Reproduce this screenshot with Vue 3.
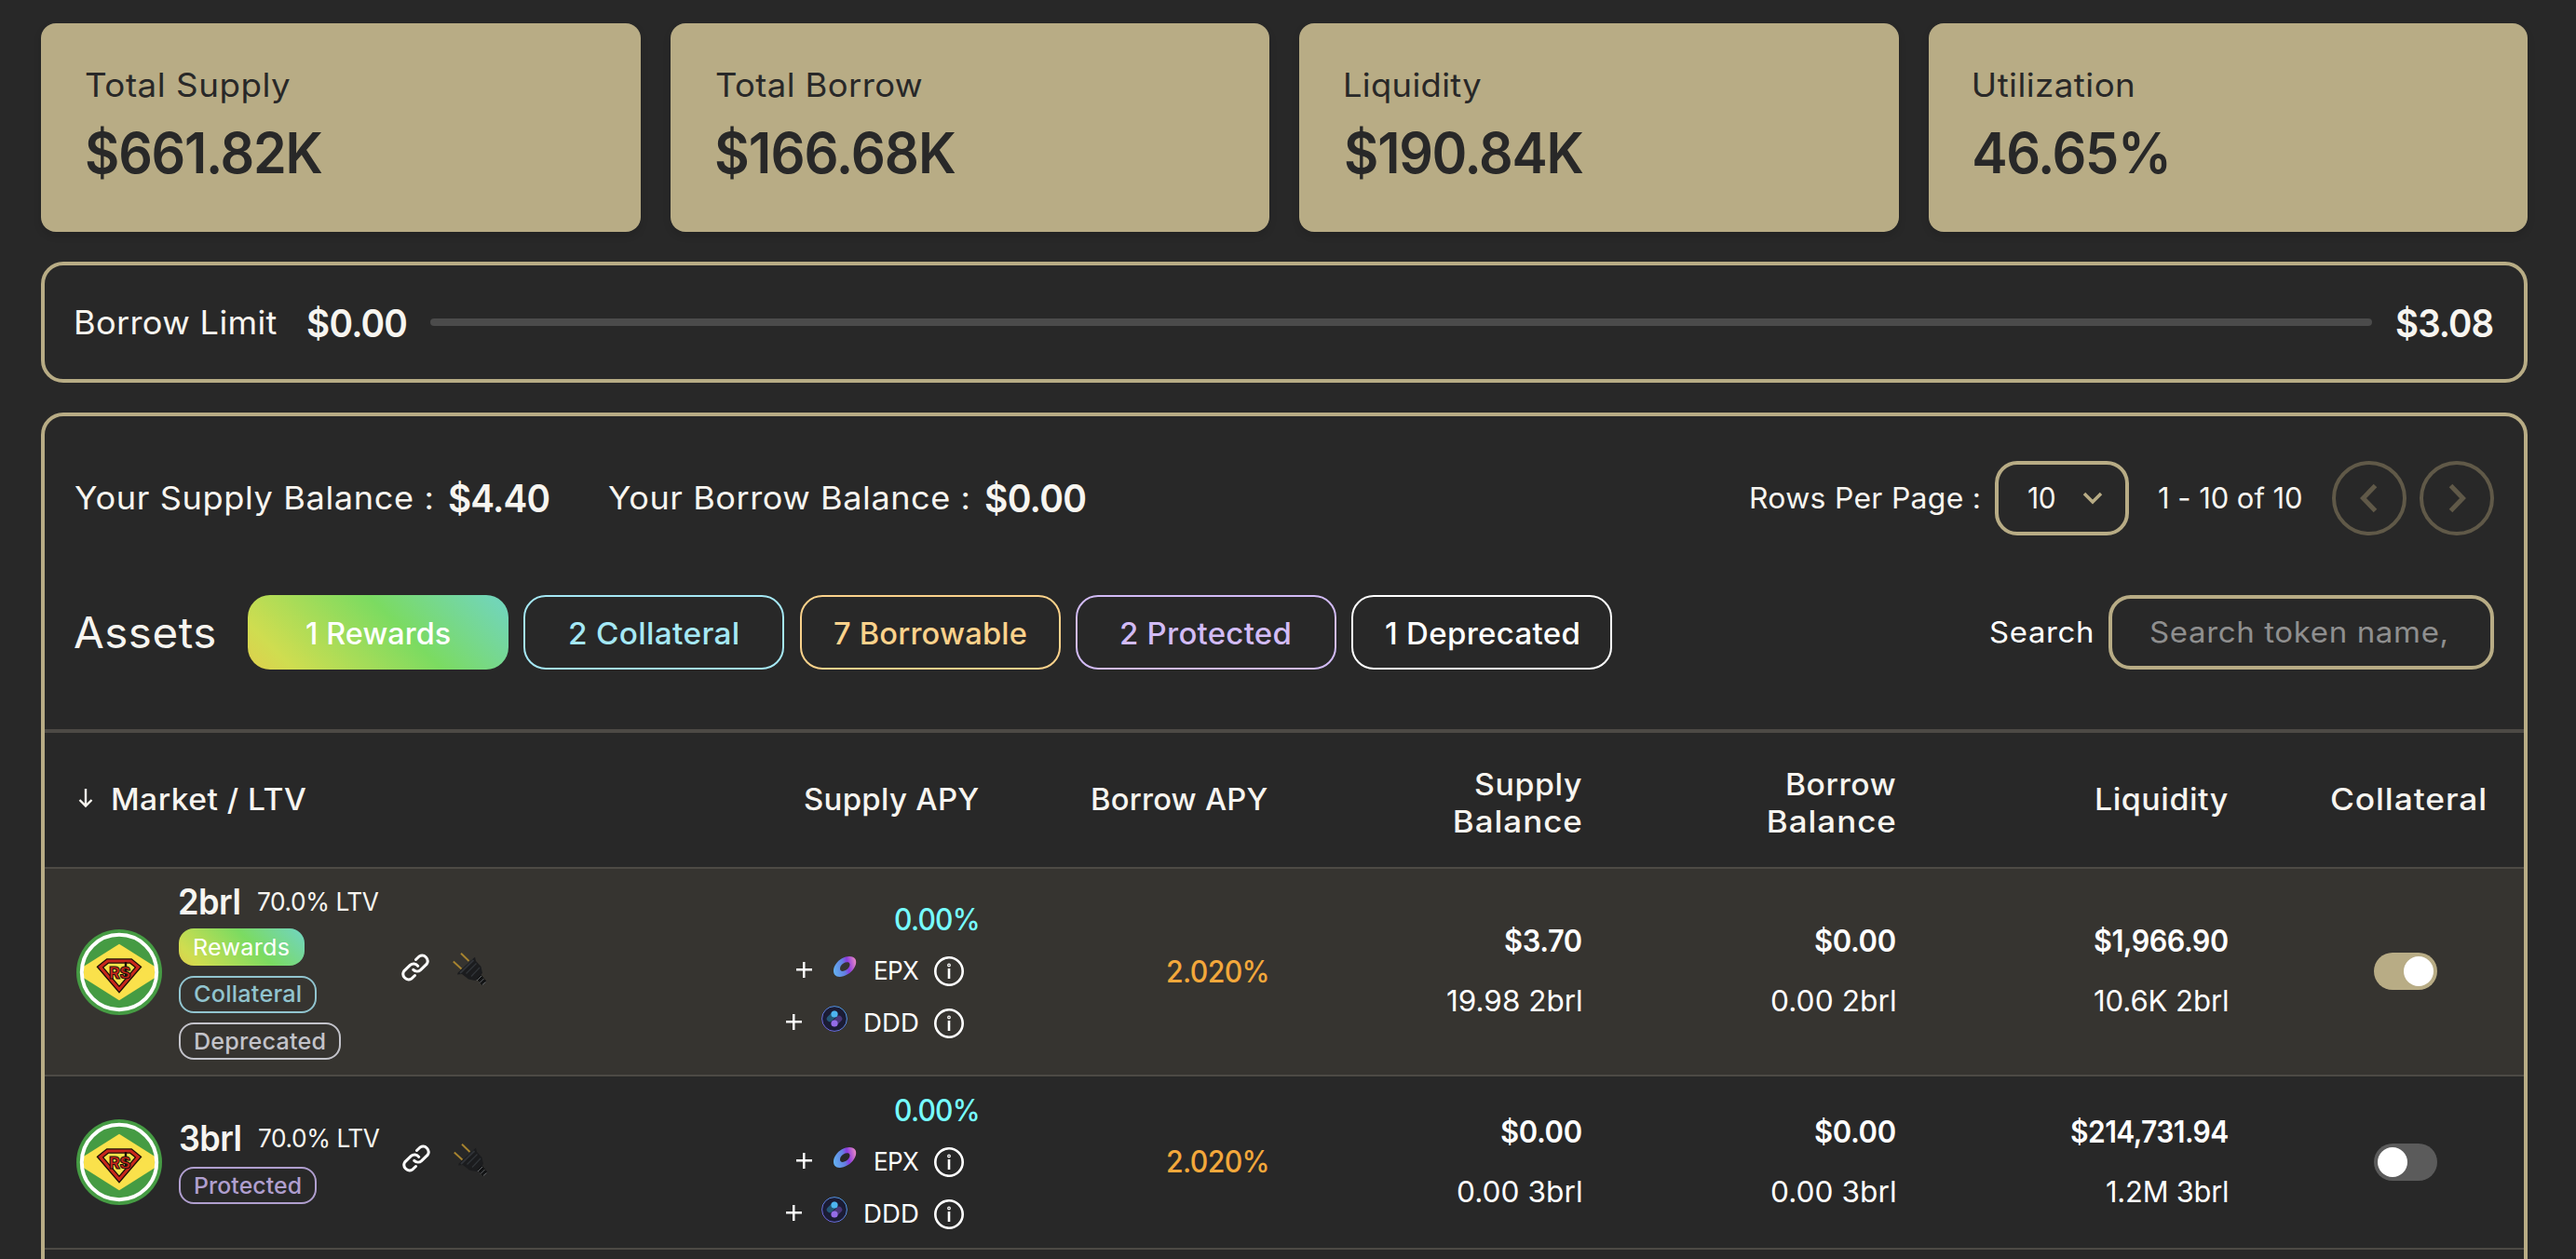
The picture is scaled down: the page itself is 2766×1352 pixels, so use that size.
<script setup>
const font = 'Inter, "Open Sans", sans-serif'

// Sets a label's glyph width and tracking so that its ink fills the width given in the design.
const vFit = {
  mounted(el, { value }) {
    const style = getComputedStyle(el)
    const ctx = document.createElement('canvas').getContext('2d')
    ctx.font = `${style.fontWeight} ${style.fontSize} ${font}`
    const text = el.textContent.trim()
    const m = ctx.measureText(text)
    const ink = m.actualBoundingBoxLeft + m.actualBoundingBoxRight
    const scale = 1 + (value / ink - 1) * 0.65
    const track = (value / scale - ink) / (text.length - 1)
    el.style.width = `${value}px`
    el.style.letterSpacing = `${track.toFixed(3)}px`
    el.style.textIndent = `${m.actualBoundingBoxLeft.toFixed(2)}px`
    el.style.transform = `scaleX(${scale.toFixed(4)})`
  },
}

const stats = [
  { label: 'Total Supply', lw: 219, value: '$661.82K', vw: 253 },
  { label: 'Total Borrow', lw: 221, value: '$166.68K', vw: 257 },
  { label: 'Liquidity', lw: 145, value: '$190.84K', vw: 255 },
  { label: 'Utilization', lw: 170, value: '46.65%', vw: 207 },
]

const filters = [
  { text: '1 Rewards', w: 154, kind: 'rewards' },
  { text: '2 Collateral', w: 180, kind: 'collateral' },
  { text: '7 Borrowable', w: 206, kind: 'borrowable' },
  { text: '2 Protected', w: 181, kind: 'protected' },
  { text: '1 Deprecated', w: 207, kind: 'deprecated' },
]

const rows = [
  {
    id: 1, name: '2brl', nw: 64, active: true,
    tags: [
      { text: 'Rewards', w: 101, kind: 'rewards' },
      { text: 'Collateral', w: 114, kind: 'collateral' },
      { text: 'Deprecated', w: 140, kind: 'deprecated' },
    ],
    cells: [
      { usd: '$3.70', uw: 82, amount: '19.98 2brl', aw: 144 },
      { usd: '$0.00', uw: 86, amount: '0.00 2brl', aw: 133 },
      { usd: '$1,966.90', uw: 143, amount: '10.6K 2brl', aw: 143 },
    ],
  },
  {
    id: 2, name: '3brl', nw: 65, active: false,
    tags: [{ text: 'Protected', w: 114, kind: 'protected' }],
    cells: [
      { usd: '$0.00', uw: 86, amount: '0.00 3brl', aw: 133 },
      { usd: '$0.00', uw: 86, amount: '0.00 3brl', aw: 133 },
      { usd: '$214,731.94', uw: 168, amount: '1.2M 3brl', aw: 130 },
    ],
  },
]
</script>

<template>
  <main class="page">
    <section class="stats">
      <div v-for="s in stats" :key="s.label" class="card">
        <div class="card-label"><span v-fit="s.lw" class="t">{{ s.label }}</span></div>
        <div class="card-value"><span v-fit="s.vw" class="t">{{ s.value }}</span></div>
      </div>
    </section>

    <section class="limit">
      <span v-fit="215" class="t limit-label">Borrow Limit</span>
      <span v-fit="106" class="t money">$0.00</span>
      <div class="track"></div>
      <span v-fit="104" class="t money">$3.08</span>
    </section>

    <section class="panel">
      <div class="bar">
        <span v-fit="384" class="t balance-label">Your Supply Balance :</span>
        <span v-fit="107" class="t money first">$4.40</span>
        <span v-fit="387" class="t balance-label">Your Borrow Balance :</span>
        <span v-fit="107" class="t money">$0.00</span>
        <div class="pager">
          <span v-fit="245" class="t small">Rows Per Page :</span>
          <div class="select">
            <span v-fit="28" class="t small">10</span>
            <svg class="caret" width="22" height="14" viewBox="0 0 22 14"><path d="M2 2l9 9 9-9" /></svg>
          </div>
          <span v-fit="153" class="t small range">1 - 10 of 10</span>
          <div class="round"><svg width="20" height="32" viewBox="0 0 20 32"><path d="M16.500 2.500L3.500 16l13 13.500" /></svg></div>
          <div class="round"><svg width="20" height="32" viewBox="0 0 20 32"><path d="M3.500 2.500L16.500 16l-13 13.500" /></svg></div>
        </div>
      </div>

      <div class="bar filters">
        <span v-fit="150" class="t assets">Assets</span>
        <div v-for="f in filters" :key="f.text" class="filter" :class="f.kind">
          <span v-fit="f.w" class="t">{{ f.text }}</span>
        </div>
        <div class="search">
          <span v-fit="109" class="t small">Search</span>
          <div class="input"><span v-fit="318" class="t small">Search token name,</span></div>
        </div>
      </div>

      <div class="table">
        <div class="row head">
          <div class="market-head">
            <svg width="18" height="24" viewBox="0 0 18 24"><path d="M9 2v18.500M2.500 14L9 20.500l6.500-6.500" /></svg>
            <span v-fit="207" class="t">Market / LTV</span>
          </div>
          <div class="num"><span v-fit="187" class="t">Supply APY</span></div>
          <div class="num"><span v-fit="188" class="t">Borrow APY</span></div>
          <div class="num two"><span v-fit="114" class="t">Supply</span><span v-fit="136" class="t">Balance</span></div>
          <div class="num two"><span v-fit="116" class="t">Borrow</span><span v-fit="136" class="t">Balance</span></div>
          <div class="num"><span v-fit="141" class="t">Liquidity</span></div>
          <div class="last-head"><span v-fit="165" class="t">Collateral</span></div>
        </div>

        <div v-for="r in rows" :key="r.id" class="row" :class="r.active ? 'tall lit' : 'short'">
          <div class="market">
            <svg class="avatar" width="92" height="92" viewBox="0 0 92 92">
              <circle cx="46" cy="46" r="46" fill="#459b43" />
              <path d="M8 39.700L46 15.700l38 24v12.600L46 76.300l-38-24z" fill="#fae14b" />
              <circle cx="46" cy="46" r="40.200" fill="none" stroke="#fff" stroke-width="4" />
              <path d="M25.500 40.500l8-6.500h25l8 6.500L46 64.500z" fill="#f3e34a" stroke="#1c0f08" stroke-width="5.600" />
              <path d="M25.500 40.500l8-6.500h25l8 6.500L46 64.500z" fill="none" stroke="#c9271c" stroke-width="3" />
              <path d="M53 35v18" stroke="#1c0f08" stroke-width="2.400" />
              <text x="46.500" y="53" text-anchor="middle" class="emblem">RS</text>
            </svg>
            <div class="info">
              <div class="title">
                <span v-fit="r.nw" class="t name">{{ r.name }}</span>
                <span v-fit="130" class="t ltv">70.0% LTV</span>
              </div>
              <div v-for="tag in r.tags" :key="tag.text" class="tag" :class="tag.kind">
                <span v-fit="tag.w" class="t">{{ tag.text }}</span>
              </div>
            </div>
            <svg class="link" width="32" height="32" viewBox="0 0 32 32">
              <path d="M16.500 7.500l3.700-3.500a5.900 5.900 0 0 1 8 8.200l-6.600 6.400a5.600 5.600 0 0 1-7.800-.200" />
              <path d="M15.500 24.500l-3.700 3.500a5.900 5.900 0 0 1-8-8.200l6.600-6.400a5.600 5.600 0 0 1 8.300.900" />
            </svg>
            <svg class="plug" width="36" height="36" viewBox="0 0 36 36">
              <path d="M9 .800l8.500 8.200M.800 9.500l8.700 8" stroke="#a8842f" stroke-width="1.900" />
              <path d="M26 23.500l3.500 4 4.500 5.500" stroke="#121314" stroke-width="6.500" />
              <path d="M22.200 6.300l1.800-1.600 1 4.300 5.500 6 1.500 7-7.500 8-7.500-1.500-7-5.500-5 .500.700-2z" fill="#1b1c1e" />
              <path d="M22.500 8L8 22" stroke="#303338" stroke-width="1.800" />
              <path d="M25.500 11.500L14.500 22.500M29 16l-9 9.500" stroke="#303438" stroke-width="1.300" />
              <path d="M31 25l-5 5M33.500 28l-4.500 4.500M35.500 31.500l-3.500 3" stroke="#66696c" stroke-width="1" />
            </svg>
          </div>

          <div class="num supply">
            <span v-fit="89" class="t apy cyan">0.00%</span>
            <div class="reward">
              <span class="plus"></span>
              <svg class="coin" width="28" height="28" viewBox="0 0 28 28">
                <defs>
                  <linearGradient :id="'ring' + r.id" x1="0" y1=".6" x2="1" y2=".4">
                    <stop offset="0" stop-color="#63aef0" /><stop offset=".45" stop-color="#637fe0" />
                    <stop offset=".65" stop-color="#8b3be0" /><stop offset="1" stop-color="#e083c4" />
                  </linearGradient>
                </defs>
                <path :fill="`url(#ring${r.id})`" fill-rule="evenodd" d="M3.500 23C-.500 18 4 9 11 5.200 17 2 23.500 2.500 25.500 6c2.500 5-2 12.500-8 16-5.500 3.300-11.500 4-14 1zM10 18.500c2 1.300 6.500-.500 8.500-3.700 1.800-2.800 1-5-1-5.500-2.500-.600-6.300 1.200-7.700 4-1.200 2.200-1 4.300.200 5.200z" />
              </svg>
              <span v-fit="46" class="t token">EPX</span>
              <svg class="tip" width="32" height="32" viewBox="0 0 32 32"><circle cx="16" cy="16" r="14.700" /><path d="M16 13v11" /><circle cx="16" cy="9.500" r=".6" /></svg>
            </div>
            <div class="reward">
              <span class="plus"></span>
              <svg class="coin" width="28" height="28" viewBox="0 0 28 28">
                <defs>
                  <linearGradient :id="'edge' + r.id" x1="0" y1="1" x2="1" y2="0">
                    <stop offset="0" stop-color="#7358d8" /><stop offset="1" stop-color="#47a5e4" />
                  </linearGradient>
                </defs>
                <circle cx="14" cy="14" r="13.400" fill="#1b1c35" :stroke="`url(#edge${r.id})`" stroke-width="1" />
                <path d="M14 9l-5 5" stroke="#245878" stroke-width="6.500" stroke-linecap="round" />
                <path d="M14 19l5-5" stroke="#493779" stroke-width="6.500" stroke-linecap="round" />
                <circle cx="14" cy="9" r="3.600" fill="#4db5f1" /><circle cx="14" cy="19" r="3.600" fill="#946ce8" />
              </svg>
              <span v-fit="57" class="t token">DDD</span>
              <svg class="tip" width="32" height="32" viewBox="0 0 32 32"><circle cx="16" cy="16" r="14.700" /><path d="M16 13v11" /><circle cx="16" cy="9.500" r=".6" /></svg>
            </div>
          </div>

          <div class="num"><span v-fit="107" class="t apy orange">2.020%</span></div>

          <div v-for="(c, i) in r.cells" :key="i" class="num amounts">
            <span v-fit="c.uw" class="t usd">{{ c.usd }}</span>
            <span v-fit="c.aw" class="t amount">{{ c.amount }}</span>
          </div>

          <div class="last"><div class="toggle" :class="{ on: r.active }"><i></i></div></div>
        </div>
      </div>
    </section>
  </main>
</template>

<style>
body { background: #282828; }
</style>

<style scoped>
* { box-sizing: border-box; }
.page {
  height: 1352px;
  overflow: hidden;
  padding: 25px 52px 0 44px;
  background: #282828;
  color: #f7f5f0;
  font-family: Inter, "Open Sans", sans-serif;
}
.t { display: block; flex: none; white-space: nowrap; transform-origin: left center; }
svg { flex: none; }

.stats { display: grid; grid-template-columns: repeat(4, 1fr); gap: 32px; }
.card {
  height: 224px;
  padding: 44px 0 0 48px;
  border-radius: 16px;
  background: #b8ac85;
  color: #282828;
  box-shadow: 0 4px 8px rgba(0, 0, 0, .12);
}
.card:nth-child(n + 2) { padding-left: 49.500px; }
.card-label { font-size: 35px; line-height: 44px; }
.card-value { margin-top: 15px; font-size: 61px; font-weight: 600; line-height: 72px; }
.card:first-child .card-value { padding-left: 1px; }

.limit {
  display: flex;
  align-items: center;
  height: 130px;
  margin-top: 32px;
  padding: 0 33px 0 34px;
  border: 4px solid #b8ac85;
  border-radius: 24px;
}
.limit-label { margin-right: 33px; padding-bottom: 1px; font-size: 35px; }
.money { padding-top: 2px; font-size: 41px; font-weight: 600; }
.track { flex: 1; height: 8px; margin: 0 26px; border-radius: 4px; background: #4b4b4b; }

.panel {
  height: 960px;
  margin-top: 32px;
  padding-top: 48px;
  border: 4px solid #b8ac85;
  border-radius: 24px;
}
.bar { display: flex; align-items: center; height: 80px; padding: 0 32px 0 32px; }
.balance-label { margin-right: 18px; padding-bottom: 1px; font-size: 34px; }
.bar .money { padding-top: 0; }
.money.first { margin-right: 64px; }
.pager { display: flex; align-items: center; margin-left: auto; }
.small { font-size: 31px; line-height: 40px; }
.select {
  display: flex;
  align-items: center;
  width: 144px;
  height: 80px;
  margin: 0 32px 0 17px;
  padding-left: 32px;
  border: 4px solid #b8ac85;
  border-radius: 24px;
}
.caret { margin-left: 30px; }
.caret path { fill: none; stroke: #b8ac85; stroke-width: 3.500; }
.range { margin-right: 33px; }
.round {
  display: flex;
  align-items: center;
  justify-content: center;
  width: 80px;
  height: 80px;
  border: 4px solid #605948;
  border-radius: 50%;
}
.round + .round { margin-left: 14px; }
.round path { fill: none; stroke: #605948; stroke-width: 5; }

.filters { margin-top: 64px; }
.assets { margin-right: 36px; font-size: 46px; }
.filter {
  display: flex;
  align-items: center;
  justify-content: center;
  width: 280px;
  height: 80px;
  margin-right: 16.250px;
  padding-top: 2px;
  border: 2px solid;
  border-radius: 24px;
  font-size: 32px;
  font-weight: 500;
}
.collateral { color: #a5e8f5; }
.borrowable { color: #fbd28b; }
.protected { color: #d2bbf6; }
.deprecated { color: #fff; }
.rewards {
  border: 0;
  background: linear-gradient(45deg, #dfcf4c 0%, #cfdd50 14%, #7bdb61 58%, #72d5b8 95%);
  color: #fff;
}
.search { display: flex; align-items: center; margin-left: auto; color: #fff; }
.input {
  display: flex;
  align-items: center;
  width: 414px;
  height: 80px;
  margin-left: 18px;
  padding-left: 41px;
  border: 4px solid #b8ac85;
  border-radius: 24px;
  color: #8f8f8f;
}

.table { margin-top: 64px; border-top: 4px solid #4d4a45; }
.row {
  display: grid;
  grid-template-columns: 702px 301px 310px 337px 337px 357px 1fr;
  align-items: center;
  border-bottom: 2px solid #4d4a45;
}
.head { height: 146px; font-size: 32px; font-weight: 500; line-height: 40px; }
.tall { height: 223px; }
.short { height: 186px; }
.lit { background: #363430; }
.num { display: flex; flex-direction: column; align-items: flex-end; }
.two { padding-top: 8px; }
.market-head { display: flex; align-items: center; padding-left: 35px; }
.market-head svg { margin: 0 20px 4px 0; }
.market-head path { fill: none; stroke: #f7f5f0; stroke-width: 2.400; }
.last-head { padding-left: 111px; }

.market { display: flex; align-items: center; padding-left: 34px; }
.info { width: 238px; margin-left: 18px; }
.title { display: flex; align-items: center; height: 48px; padding-bottom: 10px; line-height: 38px; }
.short .title { height: 50px; padding-bottom: 12px; }
.name { margin: 0 20px 0 .500px; font-size: 38px; font-weight: 600; }
.ltv { font-size: 27.500px; }
.tag {
  display: flex;
  align-items: center;
  width: max-content;
  height: 40px;
  padding: 0 15px 1px;
  border: 2px solid;
  border-radius: 16px;
  font-size: 24.500px;
  font-weight: 500;
  line-height: 32px;
}
.tag + .tag { margin-top: 10.500px; }
.tag.rewards { padding: 0 17px; border: 0; font-weight: 400; }
.tag.collateral { color: #91c4cf; }
.tag.protected { color: #b09fcf; }
.tag.deprecated { color: #c3c3ca; }
.link { margin: 0 24px 9px 0; }
.link path { fill: none; stroke: #fff; stroke-width: 3; stroke-linecap: round; }
.plug { margin-bottom: 5px; fill: none; }
.short .link { margin-left: 1px; }
.emblem { font: 800 18px Inter, sans-serif; letter-spacing: -.500px; fill: #c9271c; stroke: #1c0f08; stroke-width: 1px; }

.supply { padding-right: 1px; }
.apy { font-size: 32px; font-weight: 500; line-height: 54px; }
.cyan { color: #76fcff; }
.orange { color: #f3a83b; }
.reward { display: flex; align-items: center; height: 56px; padding-right: 15px; }
.plus {
  width: 17px;
  height: 17px;
  margin: 0 21px 3px 0;
  background:
    linear-gradient(#fff, #fff) center / 17px 2.500px no-repeat,
    linear-gradient(#fff, #fff) center / 2.500px 17px no-repeat;
}
.coin { margin: 0 19px 10px 0; }
.token { margin-right: 17px; padding-bottom: 2px; color: #fff; font-size: 27.500px; }
.tip { fill: none; stroke: #fff; stroke-width: 2.600; }
.amounts { padding-bottom: 2px; color: #fff; font-size: 32px; line-height: 64px; }
.short .supply { padding-top: 2px; }
.short .amounts { padding-bottom: 0; }
.usd { font-weight: 600; }
.amount { font-size: 31.500px; }
.last { padding-left: 157px; }
.toggle { display: flex; width: 68px; height: 40px; padding: 4px; border-radius: 20px; background: #5b5b5b; }
.toggle.on { justify-content: flex-end; background: #b8ac85; }
.toggle i { width: 32px; height: 32px; border-radius: 50%; background: #fff; }
.tall .toggle { margin-bottom: 1px; }
</style>
